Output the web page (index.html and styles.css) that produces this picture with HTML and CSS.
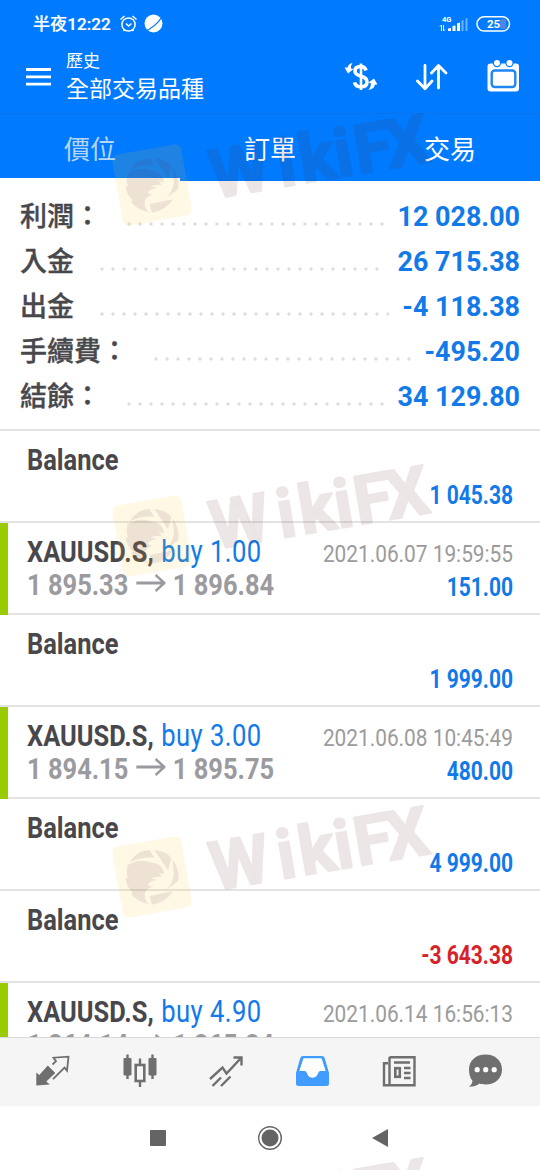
FILE: index.html
```html
<!DOCTYPE html>
<html lang="zh-Hant">
<head>
<meta charset="utf-8">
<title>歷史</title>
<link rel="stylesheet" href="styles.css">
</head>
<body>
<div class="phone">
  <header class="top">
    <div class="status">
      <span class="clock">半夜12:22</span>
      <svg class="status-left" width="46" height="20" viewBox="119 14 46 20" fill="none" stroke="#fff">
        <circle cx="128.500" cy="24.500" r="6.600" stroke-width="1.500"/>
        <path d="M120.500 19.500l4-3.500M136.500 19.500l-4-3.500M123.500 31l1.500-1.500M133.500 31l-1.500-1.500M126 23.500l2.500 2.500 3-2.500" stroke-width="1.400"/>
        <circle cx="153.500" cy="23.500" r="9" fill="#fff" stroke="none"/>
        <path d="M144 31.500Q155 28 163 15.500" stroke="#007aff" stroke-width="1.300"/>
      </svg>
      <svg class="status-right" width="75" height="22" viewBox="438 13 75 22">
        <text class="net" x="442" y="21.500">4G</text>
        <path d="M440 26.500l1.500-1.500v6M443.500 25v6l1.500-1.500" fill="none" stroke="#fff" stroke-width="1"/>
        <path d="M448 31v-2.500l3-.6V31zM452.500 31v-5l3-.6V31zM457 31v-7.500l3-1V31z" fill="#fff"/>
        <path d="M461.500 31V20.500l2-.8V31zM465.500 31v-12.500l2-.6V31z" fill="#6db2ff"/>
        <rect x="500" y="19" width="6" height="10" rx="2" fill="#4f86e6"/>
        <rect x="477" y="16.800" width="32.500" height="14.200" rx="7.100" fill="none" stroke="#fff" stroke-width="1.500"/>
        <text class="batt" x="487" y="28">25</text>
      </svg>
    </div>
    <div class="appbar">
      <svg class="menu" width="25" height="18" viewBox="0 0 25 18"><path d="M0 1.500h25M0 8.800h25M0 16.100h25" stroke="#fff" stroke-width="2.800"/></svg>
      <div class="titles"><div class="sub">歷史</div><div class="main">全部交易品種</div></div>
      <svg width="34" height="32" viewBox="344 61 34 32" fill="none" stroke="#fff">
        <path d="M361 63.500v26.500" stroke-width="2.600"/>
        <path d="M366 70.500q-1-4-5.500-4-5.500 0-5.500 4.500 0 3.500 5.500 5 6.500 1.500 6.500 6 0 4.800-6 4.800-5.500 0-6.500-4.500" stroke-width="3.600"/>
        <path d="M344.500 67.500l3.500 6 5.500-4.500-2.500-.5q-.5-3 1.500-5.500-4 .8-5 4.500zM377.500 84.500l-3.500-6-5.500 4 2.500 1q0 3.500-2.500 6.500 5.500-1 6.500-5.500z" fill="#fff" stroke="none"/>
      </svg>
      <svg class="sort" width="32" height="28" viewBox="417 62.500 32 28" fill="none" stroke="#fff" stroke-width="2.800" stroke-linecap="round" stroke-linejoin="round"><path d="M426 65v23M418.500 80.500l7.500 7.800 7-7.800M439.500 87.500V65.500M432.500 72.500l7-7.500 7.500 7.500"/></svg>
      <svg width="34" height="34" viewBox="486 60.500 34 34">
        <rect x="487.500" y="64" width="31.500" height="28" rx="3" fill="#fff"/>
        <circle cx="497" cy="63.500" r="4.200" fill="#007aff"/><circle cx="509.500" cy="63.500" r="4.200" fill="#007aff"/>
        <circle cx="497" cy="63.500" r="3" fill="#fff"/><circle cx="509.500" cy="63.500" r="3" fill="#fff"/>
        <rect x="491.700" y="71" width="23.600" height="16.500" rx="3" fill="none" stroke="#1f86f2" stroke-width="2.400"/>
      </svg>
    </div>
    <nav class="tabs"><a class="active">價位</a><a>訂單</a><a>交易</a></nav>
  </header>

  <section class="summary">
    <div class="sum"><span class="label">利潤：</span><i class="dots"></i><b>12 028.00</b></div>
    <div class="sum"><span class="label">入金</span><i class="dots"></i><b>26 715.38</b></div>
    <div class="sum"><span class="label">出金</span><i class="dots"></i><b>-4 118.38</b></div>
    <div class="sum"><span class="label">手續費：</span><i class="dots"></i><b>-495.20</b></div>
    <div class="sum"><span class="label">結餘：</span><i class="dots"></i><b>34 129.80</b></div>
  </section>

  <main class="list">
    <article class="row"><div class="line"><b class="name">Balance</b></div><div class="line"><b class="amount">1 045.38</b></div></article>
    <article class="row deal"><div class="line"><span><b class="name">XAUUSD.S,</b><span class="side">buy 1.00</span></span><time>2021.06.07 19:59:55</time></div><div class="line"><span class="price">1 895.33<svg class="arrow" viewBox="0 0 35 18" preserveAspectRatio="none"><path d="M0 9h33M23 1l10.500 8L23 17"/></svg>1 896.84</span><b class="amount">151.00</b></div></article>
    <article class="row"><div class="line"><b class="name">Balance</b></div><div class="line"><b class="amount">1 999.00</b></div></article>
    <article class="row deal"><div class="line"><span><b class="name">XAUUSD.S,</b><span class="side">buy 3.00</span></span><time>2021.06.08 10:45:49</time></div><div class="line"><span class="price">1 894.15<svg class="arrow" viewBox="0 0 35 18" preserveAspectRatio="none"><path d="M0 9h33M23 1l10.500 8L23 17"/></svg>1 895.75</span><b class="amount">480.00</b></div></article>
    <article class="row"><div class="line"><b class="name">Balance</b></div><div class="line"><b class="amount">4 999.00</b></div></article>
    <article class="row"><div class="line"><b class="name">Balance</b></div><div class="line"><b class="amount loss">-3 643.38</b></div></article>
    <article class="row deal"><div class="line"><span><b class="name">XAUUSD.S,</b><span class="side">buy 4.90</span></span><time>2021.06.14 16:56:13</time></div><div class="line"><span class="price">1 864.14<svg class="arrow" viewBox="0 0 35 18" preserveAspectRatio="none"><path d="M0 9h33M23 1l10.500 8L23 17"/></svg>1 865.24</span></div></article>
  </main>

  <nav class="toolbar">
    <svg viewBox="36 1053 36 36"><path d="M37.300 1085.500v-13l3 2.500 8.500-9.500 7.500 7.500-9 8.500 3.500 3z" fill="#6f6f6f"/><path d="M53.500 1064.500l3.500-3.300-2.500-3.500 15-1-1.500 14-2.500-3-11.500 11.500" fill="none" stroke="#6f6f6f" stroke-width="1.800"/></svg>
    <svg viewBox="122 1053 36 36"><path d="M127.500 1054.500v24.500M152.500 1054.500v24.500M140 1058.500v5.500M140 1082v5" stroke="#6f6f6f" stroke-width="2.400"/><rect x="123.500" y="1058" width="8" height="17.500" rx="1" fill="#6f6f6f"/><rect x="148.500" y="1058" width="8" height="17.500" rx="1" fill="#6f6f6f"/><rect x="135.700" y="1065" width="8.600" height="16" fill="none" stroke="#6f6f6f" stroke-width="2.600"/></svg>
    <svg viewBox="208 1053 36 36" fill="none" stroke="#6f6f6f" stroke-width="2.400"><path d="M210 1079l12.500-11.500 4 6 14.500-15.500M233.500 1057.500h8v8M212.500 1086l8.500-8.500M221 1086l9.500-9.500"/></svg>
    <svg viewBox="294 1053 36 36"><path fill-rule="evenodd" d="M303 1056h19q2 0 2.700 2l4.300 15v10.500q0 2.500-2.500 2.500h-28q-2.500 0-2.500-2.500V1073l4.300-15q.7-2 2.700-2zM303.500 1058.500l-4 12.500h5.500q1.500 0 2 2 1.500 4.500 5.500 4.500t5.500-4.500q.5-2 2-2h5.500l-4-12.500z" fill="#409cff"/><path d="M303.500 1058.500l-4 12.500h5.500q1.500 0 2 2 1.500 4.500 5.500 4.500t5.500-4.500q.5-2 2-2h5.500l-4-12.500z" fill="#fff"/></svg>
    <svg viewBox="380 1053 36 36" fill="none" stroke="#6f6f6f" stroke-width="2.400"><path d="M389.500 1057.300h25v28h-30.500v-22h4M389.500 1057v28M394 1062.500h16M404 1068h6.500M404 1073h6.500M404 1078h6.500"/><rect x="395.300" y="1068.200" width="4.500" height="8.600" stroke-width="2.600"/></svg>
    <svg viewBox="466 1053 38 36"><path d="M485.500 1054.500c9.500 0 16.500 6 16.500 15s-7 15-16.500 15c-2.500 0-4.500-.3-6-.9-3 2.400-7 3.400-10.500 3.200 2-1.600 3.500-4 3.500-6-2.500-2.600-3.500-7.300-3.500-11.300 0-9 7-15 16.500-15z" fill="#6f6f6f"/><g fill="#fff"><circle cx="477.200" cy="1069.700" r="2.600"/><circle cx="485.700" cy="1069.700" r="2.600"/><circle cx="494.200" cy="1069.700" r="2.600"/></g></svg>
  </nav>
  <footer class="sysnav">
    <svg viewBox="0 0 24 24"><rect x="4" y="4" width="16" height="16" rx=".8" fill="#646464"/></svg>
    <svg viewBox="0 0 24 24"><circle cx="12" cy="12" r="11.300" fill="none" stroke="#646464" stroke-width="1.400"/><circle cx="12" cy="12" r="8.500" fill="#646464"/></svg>
    <svg viewBox="0 0 24 24"><path d="M2 12l16-9v18z" fill="#646464"/></svg>
  </footer>

  <svg class="watermarks" width="540" height="1170" viewBox="0 0 540 1170" aria-hidden="true">
    <defs>
      <g id="wm">
        <rect transform="translate(152 536) rotate(-10)" x="-35" y="-36" width="70" height="72" rx="6" fill="#ffc81e" opacity=".12"/>
        <g transform="translate(152 536) scale(.3333) translate(-141 -140)" fill="#5c2850" opacity=".1">
          <path d="M74 96Q95 60 133 59L148 82Q105 80 74 96zM148 59Q187 63 199 84L189 120zM203 88Q226 120 219 153L183 179Q200 165 207 135zM134 197L204 183Q182 217 141 223z"/>
          <path d="M68 104Q105 82 142 97 160 100 168 109 178 118 175 133L160 126 170 140Q148 138 138 145L157 148Q135 151 128 164L142 170Q122 173 119 191 118 207 130 222 94 212 78 190L84 186Q64 172 62 142L70 145Q62 130 68 104z"/>
        </g>
        <text class="brand" transform="translate(212 550) rotate(-9.700)" x="2 70 92 128 148 180" y="0">WikiFX</text>
      </g>
    </defs>
    <use href="#wm" y="-351"/><use href="#wm"/><use href="#wm" y="341"/><use href="#wm" y="693"/>
  </svg>
</div>
</body>
</html>
```
FILE: styles.css
```css
* { box-sizing: border-box; }
body { margin: 0; background: #fff; font-family: Roboto, "Noto Sans CJK TC", sans-serif; }
svg { display: block; flex: none; }
.phone { position: relative; width: 540px; height: 1170px; overflow: hidden; display: flex; flex-direction: column; }

.top { height: 181px; background: #007aff; color: #fff; flex: none; }
.status { height: 48px; padding: 0 27px 0 33px; display: flex; align-items: center; }
.clock { font-size: 17px; font-weight: 500; letter-spacing: .1px; line-height: 20px; width: 86px; white-space: nowrap; -webkit-text-stroke: .2px #fff; }
.status-right { margin-left: auto; }
.net { font-size: 7.500px; font-weight: 700; fill: #fff; }
.batt { font-size: 11.500px; font-weight: 700; fill: #fff; }
.appbar { height: 65px; padding: 0 20px 8px 26px; display: flex; align-items: center; }
.titles { margin-left: 15px; width: 278px; }
.sub { font-size: 17px; line-height: 24px; }
.main { font-size: 23px; line-height: 32px; padding-top: 1px; margin-bottom: -1px; }
.appbar .sort { margin: 0 38px; }
.tabs { height: 68px; display: grid; grid-template-columns: repeat(3, 1fr); border-top: 1px solid #0873ed; }
.tabs a { height: 67px; padding-top: 6px; text-align: center; font-size: 26px; line-height: 60px; }
.tabs .active { color: #b4d6fb; border-bottom: 3px solid #fff; }

.summary { height: 250px; flex: none; padding: 12px 20px 0; border-bottom: 2px solid #e3e3e3; }
.sum { height: 45px; display: flex; align-items: center; }
.label { font-size: 27px; font-weight: 500; -webkit-text-stroke: .35px #48484c; color: #48484c; line-height: 41px; padding-top: 4px; white-space: nowrap; }
.sum b { font-size: 26.900px; color: #127ae8; font-weight: 700; padding-top: 2px; }
.dots { flex: 1; height: 4px; margin: 16px 13px 0 26px; background: radial-gradient(circle at 2px 2px, #dedede 1.300px, transparent 2px) 0 0 / 11px 4px; }

.list { height: 606px; flex: none; overflow: hidden; }
.row { height: 92px; padding: 12px 0 0 27px; border-bottom: 2px solid #e3e3e3; }
.deal { padding-left: 19px; border-left: 8px solid #99cc00; border-bottom: 0; box-shadow: inset 0 -2px #e3e3e3; }
.line { display: flex; align-items: baseline; width: 578.600px; height: 33px; line-height: 33px; font-size: 30px; white-space: nowrap; transform: scaleX(.84); transform-origin: 0 0; }
.line::before { content: ""; display: inline-block; width: 0; height: 27px; }
.name { font-size: 30.300px; color: #48484c; }
.side { font-size: 30.500px; letter-spacing: .5px; color: #127ae8; margin-left: 9px; }
time { font-size: 24.800px; color: #9b9b9b; margin-left: auto; }
.price { font-size: 30.300px; font-weight: 700; color: #9b9b9f; }
.arrow { display: inline-block; width: 35px; height: 18px; margin: 0 9px; vertical-align: 3px; fill: none; stroke: #9b9b9f; stroke-width: 2.800px; }
.amount { font-size: 25px; color: #127ae8; margin-left: auto; position: relative; top: 1px; }
.loss { color: #d8222a; }

.toolbar { height: 69px; flex: none; background: #f5f5f5; border-top: 1px solid #d9d9d9; display: grid; grid-template-columns: repeat(6, 86.300px); justify-content: center; justify-items: center; padding: 15px 2px 0 0; }
.toolbar svg { width: 36px; height: 36px; }
.toolbar svg:last-child { width: 38px; }
.sysnav { height: 64px; display: flex; justify-content: center; gap: 88px; align-items: center; background: #fff; }
.sysnav svg { width: 24px; height: 24px; }
.watermarks { position: absolute; inset: 0; pointer-events: none; }
.brand { font-size: 68px; font-weight: 700; fill: #5a2323; stroke: #5a2323; stroke-width: 2px; stroke-linejoin: round; opacity: .11; }
```
